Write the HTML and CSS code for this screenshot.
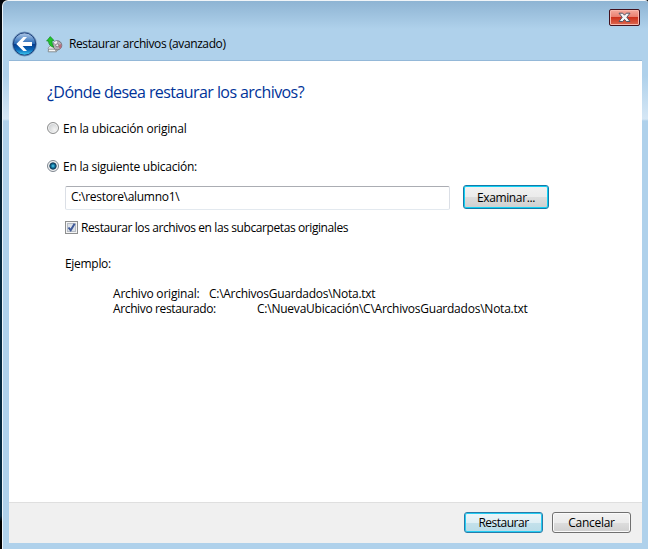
FILE: index.html
```html
<!DOCTYPE html>
<html lang="es">
<head>
<meta charset="utf-8">
<title>Restaurar archivos (avanzado)</title>
<link rel="stylesheet" href="styles.css">
</head>
<body>
<div class="window">
  <header class="titlebar">
    <svg class="back" width="26" height="26" viewBox="0 0 26 26">
      <defs>
        <linearGradient id="ball" x1="0" y1="0" x2="0" y2="1">
          <stop offset="0" stop-color="#b4cbe8"/><stop offset=".3" stop-color="#5c8fcb"/>
          <stop offset=".48" stop-color="#2869b4"/><stop offset=".52" stop-color="#063f91"/>
          <stop offset=".75" stop-color="#0a67b8"/><stop offset="1" stop-color="#43d4f7"/>
        </linearGradient>
      </defs>
      <circle cx="12.5" cy="13" r="12" fill="#c3d9ee" stroke="#5f87b1" stroke-width=".8"/>
      <circle cx="12.5" cy="13" r="11.2" fill="url(#ball)" stroke="#183d78" stroke-width="1"/>
      <path d="M4.3 13 L11.3 6 H15 L10.6 11 H20 V15 H10.6 L15 20 H11.3 Z" fill="#fff"/>
    </svg>
    <svg class="disk" width="17" height="17" viewBox="0 0 17 17">
      <path d="M2 12 L5 9 H14 L11 15 H3 Z" fill="#e5e5e5" stroke="#85898b" stroke-width=".7"/>
      <ellipse cx="11.3" cy="9.3" rx="4.5" ry="4.6" fill="#b3aeb6" stroke="#66666b" stroke-width=".8"/>
      <path d="M11 9 L7.5 6.5 Q9 5 11 5 Z" fill="#f4eff4"/>
      <path d="M11.3 9.5 L15.3 8 Q15.8 12 14 12.8 Z" fill="#b96e7e"/>
      <circle cx="11.2" cy="9.3" r="1.5" fill="#eee" stroke="#686268" stroke-width=".7"/>
      <path d="M2.5 13.2 H9 L10.4 15.8 H2.2 Z" fill="#f6f6f6" stroke="#6d7274" stroke-width=".7"/>
      <path d="M.6 5 L4.3 .6 L8 4.5 L6 4.7 Q5.7 8.5 7.7 11.2 Q2.8 10.5 2.5 5 Z" fill="#22c52c" stroke="#128a1e" stroke-width=".7"/>
    </svg>
    <h1 class="caption">Restaurar archivos (avanzado)</h1>
    <button class="close" aria-label="Cerrar">
      <svg width="13" height="11" viewBox="0 0 13 11">
        <path d="M1 1.2 H4.7 L6.5 3.2 L8.3 1.2 H12 L8.8 5.3 L12 9.5 H8.3 L6.5 7.4 L4.7 9.5 H1 L4.2 5.3 Z" fill="#f5f5f5" stroke="#535666"/>
      </svg>
    </button>
  </header>
  <main class="page">
    <section class="body">
      <h2 class="question">¿Dónde desea restaurar los archivos?</h2>
      <div class="option first"><i class="radio"></i><span class="t-orig">En la ubicación original</span></div>
      <div class="option second"><i class="radio on"></i><span class="t-next">En la siguiente ubicación:</span></div>
      <div class="indent">
        <div class="location"><div class="field"><span class="t-path">C:\restore\alumno1\</span></div><button class="btn browse"><span class="t-browse">Examinar...</span></button></div>
        <div class="checkrow">
          <svg class="check" width="13" height="13" viewBox="0 0 13 13">
            <rect x=".5" y=".5" width="12" height="12" fill="#f4f4f4" stroke="#8e8f8f"/>
            <rect x="2.5" y="2.5" width="8" height="8" fill="#dce1e7" stroke="#b6bcc5"/>
            <path d="M3.5 6.5 L5.7 9.3 L9.6 2.8" fill="none" stroke="#3e5999" stroke-width="2"/>
          </svg>
          <span class="t-sub">Restaurar los archivos en las subcarpetas originales</span>
        </div>
        <p class="example"><span class="t-ex">Ejemplo:</span></p>
        <div class="paths">
          <div class="path"><span class="key-a">Archivo original:</span><span class="t-va">C:\ArchivosGuardados\Nota.txt</span></div>
          <div class="path"><span class="key-b">Archivo restaurado:</span><span class="t-vb">C:\NuevaUbicación\C\ArchivosGuardados\Nota.txt</span></div>
        </div>
      </div>
    </section>
    <footer class="footer">
      <button class="btn primary"><span class="t-ok">Restaurar</span></button>
      <button class="btn cancel"><span class="t-no">Cancelar</span></button>
    </footer>
  </main>
</div>
</body>
</html>
```
FILE: styles.css
```css
* { box-sizing: border-box; }
body { margin: 0; background: linear-gradient(#05080c, #06283d 45%, #062a40 94%, #000 95%); font: 12px/15px "Open Sans", "Noto Sans", sans-serif; color: #000; overflow: hidden; }
h1, h2, p { margin: 0; font-weight: 400; }
span { white-space: nowrap; }
.window {
  height: 549px; margin-left: 2px; padding: 0 6px 6px 6px; border-left: 1px solid #edf5fb; border-top: 1px solid #f1f5f8; border-radius: 6px 3px 0 0;
  background: linear-gradient(#8eb4d3, #afd1eb 28px, #afd1eb 55px, #afd1eb 75px, #d5e7f5 118px, #afd1eb 120px);
}
.titlebar { height: 60px; display: flex; align-items: flex-start; border-bottom: 1px solid #94b8d8; }
.back { margin: 30px 0 0 3px; }
.disk { margin: 35px 0 0 8px; }
.caption { margin: 35px 0 0 6px; font-size: 12px; line-height: 16px; letter-spacing: -.4px; }
.close { margin: 8px 2px 0 auto; width: 31px; height: 17px; padding: 0; border: 1px solid #43111d; border-radius: 2px; display: flex; align-items: center; justify-content: center; background: linear-gradient(#f5aa9c, #e97f70 46%, #cd321d 50%, #dc6950); box-shadow: inset 0 0 0 1px #f9b8ad; }
.page { height: 482px; background: #fff; display: flex; flex-direction: column; }
.body { flex: 1; padding: 20px 0 0 38px; }
.question { font-size: 16px; line-height: 22px; color: #003399; letter-spacing: -.57px; white-space: nowrap; }
.option { display: flex; align-items: center; height: 16px; gap: 4px; }
.first { margin-top: 17px; }
.second { margin-top: 22px; }
.t-orig { letter-spacing: -.2px; }
.t-next { letter-spacing: -.25px; }
.t-path { letter-spacing: -.3px; }
.t-browse { letter-spacing: -.36px; }
.t-sub { letter-spacing: -.405px; }
.t-ex { letter-spacing: -.3px; }
.t-va { letter-spacing: -.27px; }
.t-vb { letter-spacing: -.23px; }
.t-ok { letter-spacing: -.5px; }
.t-no { letter-spacing: -.3px; }
.radio { width: 12px; height: 12px; border-radius: 50%; border: 1px solid #8e8f8f; background: radial-gradient(circle at 65% 65%, #f4f4f4, #bfc3c6); box-shadow: inset 0 0 0 1px #f4f4f4; }
.radio.on { border-color: #7f8790; background: radial-gradient(circle at 50% 50%, #62d2f1 0, #1784ae 1.5px, #0b3453 3.2px, #d7dde1 4px, #e9edf0 5px); }
.indent { padding-left: 18px; }
.location { display: flex; margin-top: 11px; gap: 13px; }
.field { width: 385px; height: 24px; margin-top: 1px; border: 1px solid #dbdfe6; border-top-color: #abadb3; border-bottom-color: #e3e9ef; border-radius: 2px; padding: 2px 0 0 5px; }
.btn { font: inherit; color: #000; padding: 0; border: 1px solid #707070; border-radius: 3px; display: flex; align-items: center; justify-content: center; background: linear-gradient(#f2f2f2, #ebebeb 50%, #ddd 51%, #cfcfcf); box-shadow: inset 0 0 0 1px #fafafa; }
.browse { width: 86px; height: 24px; border-color: #147ba9; box-shadow: inset 0 0 0 1px #11d0f3; }
.checkrow { display: flex; align-items: center; height: 16px; margin-top: 9px; gap: 3px; }
.example { margin-top: 21px; }
.paths { margin: 15px 0 0 48px; }
.path { display: flex; height: 15px; }
.key-a { width: 96px; letter-spacing: -.2px; }
.key-b { width: 144px; letter-spacing: -.37px; }
.footer { height: 41px; border-top: 1px solid #dfdfdf; background: #f0f0f0; display: flex; justify-content: flex-end; gap: 9px; padding: 9px 11px 0 0; }
.primary { width: 79px; height: 21px; border-color: #287ca9; background: linear-gradient(#eef6f9, #dfeff5 50%, #c4e1eb 51%, #b9dce8); box-shadow: inset 0 0 0 1px #24cdf3; }
.cancel { width: 79px; height: 21px; }
```
